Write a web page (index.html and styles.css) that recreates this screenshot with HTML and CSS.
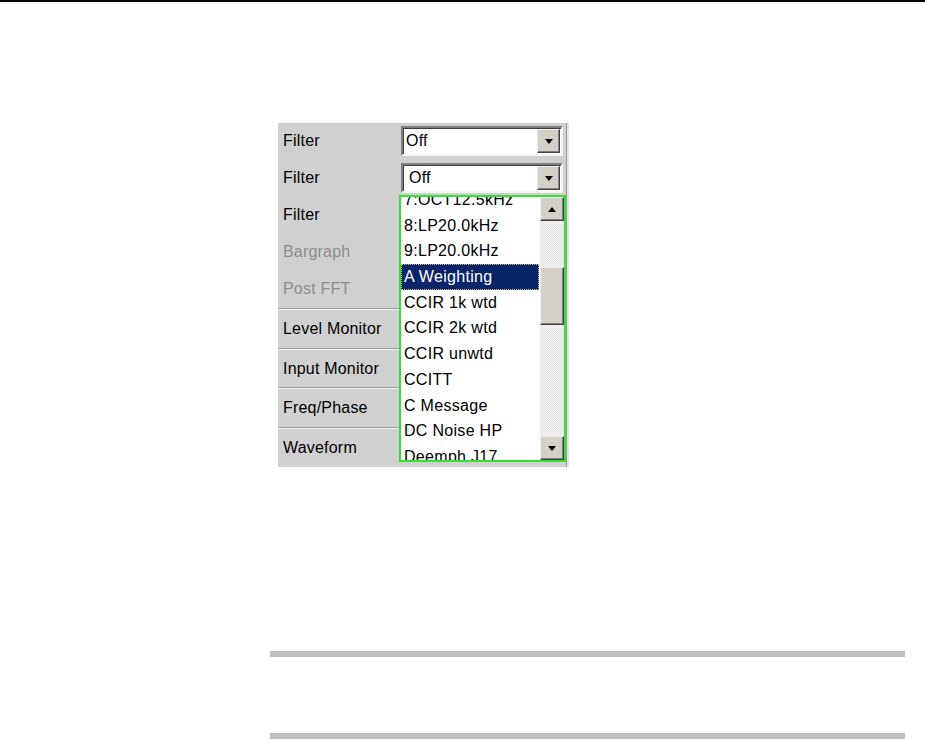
FILE: index.html
```html
<!DOCTYPE html>
<html lang="en">
<head>
    <meta charset="UTF-8">
    <meta name="viewport" content="width=device-width, initial-scale=1.0">
    <title>Filter Panel</title>
    <link rel="stylesheet" href="styles.css">
</head>
<body>

    <!-- Page header rule -->
    <div class="top-rule"></div>

    <!-- Analyzer settings panel -->
    <div class="panel">
        <div class="row">
            <span class="label">Filter</span>
            <div class="combo">
                <span class="combo-text">Off</span>
                <span class="drop-btn"><span class="arrow-down"></span></span>
            </div>
        </div>
        <div class="row">
            <span class="label">Filter</span>
            <div class="combo focused">
                <span class="combo-text">Off</span>
                <span class="drop-btn"><span class="arrow-down"></span></span>
            </div>
        </div>
        <div class="row">
            <span class="label">Filter</span>
        </div>
        <div class="row">
            <span class="label disabled">Bargraph</span>
        </div>
        <div class="row last">
            <span class="label disabled">Post FFT</span>
        </div>

        <div class="section">Level Monitor</div>
        <div class="section">Input Monitor</div>
        <div class="section">Freq/Phase</div>
        <div class="section">Waveform</div>

        <!-- Open drop-down list of the second filter -->
        <div class="dropdown">
            <div class="items">
                <div class="item">7:OCT12.5kHz</div>
                <div class="item">8:LP20.0kHz</div>
                <div class="item">9:LP20.0kHz</div>
                <div class="item selected">A Weighting</div>
                <div class="item">CCIR 1k wtd</div>
                <div class="item">CCIR 2k wtd</div>
                <div class="item">CCIR unwtd</div>
                <div class="item">CCITT</div>
                <div class="item">C Message</div>
                <div class="item">DC Noise HP</div>
                <div class="item">Deemph J17</div>
            </div>
            <div class="scrollbar">
                <div class="sb-btn"><span class="arrow-up"></span></div>
                <div class="sb-track">
                    <div class="sb-thumb"></div>
                </div>
                <div class="sb-btn"><span class="arrow-down"></span></div>
            </div>
        </div>
    </div>

    <!-- Note bars -->
    <div class="note-bar first"></div>
    <div class="note-bar"></div>

</body>
</html>
```

FILE: styles.css
```css
body, html {
    margin: 0;
    background: #ffffff;
    font-family: 'Liberation Sans', Arial, sans-serif;
    font-size: 16px;
    color: #000;
}

.top-rule {
    height: 2px;
    background: #000;
}

/* Settings panel */
.panel {
    position: relative;
    margin: 121px 0 0 278px;
    width: 288px;
    height: 344px;
    background: #d0d0d0;
    border-right: 1px solid #9a9a9a;
    box-shadow: 2px 0 0 #e2e2e2;
    display: flex;
    flex-direction: column;
    letter-spacing: 0.2px;
}

.row {
    height: 37px;
    display: flex;
    align-items: center;
}

.row.last {
    height: 38px;
}

.label {
    width: 123px;
    padding-left: 5px;
    box-sizing: border-box;
}

.label.disabled {
    color: #8c8c8c;
}

/* Combo box (sunken) */
.combo {
    width: 162px;
    height: 30px;
    box-sizing: border-box;
    background: #fff;
    border: 2px solid;
    border-color: #808080 #f4f4f4 #f4f4f4 #808080;
    box-shadow: inset 1px 1px 0 #404040;
    display: flex;
    align-items: center;
    justify-content: space-between;
    padding: 0 1px 0 3px;
}

.combo.focused {
    padding-left: 6px;
}

.drop-btn {
    width: 23px;
    height: 24px;
    box-sizing: border-box;
    background: #d4d0c8;
    border: 1px solid;
    border-color: #eeeeee #404040 #404040 #eeeeee;
    box-shadow: inset -1px -1px 0 #808080;
    display: flex;
    align-items: center;
    justify-content: center;
}

.arrow-down {
    width: 0;
    height: 0;
    border-left: 4.5px solid transparent;
    border-right: 4.5px solid transparent;
    border-top: 5px solid #000;
}

.arrow-up {
    width: 0;
    height: 0;
    border-left: 4.5px solid transparent;
    border-right: 4.5px solid transparent;
    border-bottom: 5px solid #000;
}

/* Section buttons */
.section {
    height: 38px;
    border-top: 1px solid #9c9c9c;
    box-shadow: inset 0 1px 0 #f2f2f2;
    padding: 1px 0 0 5px;
    display: flex;
    align-items: center;
}

/* Drop-down list */
.dropdown {
    position: absolute;
    left: 121px;
    top: 72px;
    width: 167px;
    height: 267px;
    box-sizing: border-box;
    border: 2px solid #33e033;
    background: #fff;
    display: flex;
    overflow: hidden;
    letter-spacing: 0.3px;
}

.items {
    width: 139px;
    margin-top: -10px;
}

.item {
    height: 25.7px;
    line-height: 25.7px;
    padding-left: 3px;
    white-space: nowrap;
}

.item.selected {
    background: #0a246a;
    color: #fff;
    outline: 1px dotted #d8c070;
    outline-offset: -1px;
    margin-right: 1px;
}

.scrollbar {
    width: 24px;
    display: flex;
    flex-direction: column;
}

.sb-btn {
    height: 24px;
    box-sizing: border-box;
    background: #d4d0c8;
    border: 1px solid;
    border-color: #eeeeee #404040 #404040 #eeeeee;
    box-shadow: inset -1px -1px 0 #808080;
    display: flex;
    align-items: center;
    justify-content: center;
}

.sb-track {
    flex: 1;
    background: repeating-conic-gradient(#dcdcdc 0 25%, #ffffff 0 50%) 0 0 / 2px 2px;
}

.sb-thumb {
    margin-top: 46px;
    height: 58px;
    box-sizing: border-box;
    background: #d4d0c8;
    border: 1px solid;
    border-color: #eeeeee #404040 #404040 #eeeeee;
    box-shadow: inset -1px -1px 0 #808080;
}

/* Gray note bars */
.note-bar {
    margin: 76px 0 0 270px;
    width: 635px;
    height: 6px;
    background: #c0c0c0;
}

.note-bar.first {
    margin-top: 184px;
}
```
